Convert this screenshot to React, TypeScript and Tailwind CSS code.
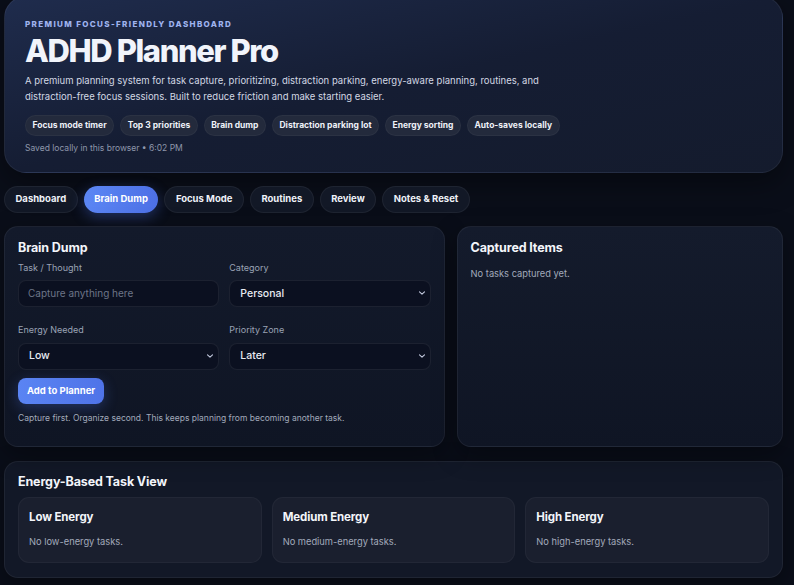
import React, { useState } from "react";

const features = [
  "Focus mode timer",
  "Top 3 priorities",
  "Brain dump",
  "Distraction parking lot",
  "Energy sorting",
  "Auto-saves locally",
];

const tabs = ["Dashboard", "Brain Dump", "Focus Mode", "Routines", "Review", "Notes & Reset"];

const Chevron = () => (
  <svg width="8" height="8" viewBox="0 0 8 8" className="pointer-events-none absolute right-[5px] top-1/2 -translate-y-1/2 text-[#c5cbe0]">
    <path d="M1.5 2.8 4 5.2 6.5 2.8" fill="none" stroke="currentColor" strokeWidth="1.1" strokeLinecap="round" strokeLinejoin="round" />
  </svg>
);

const Select = ({ value, options }: { value: string; options: string[] }) => (
  <div className="relative">
    <select
      defaultValue={value}
      className="h-[27px] w-full appearance-none rounded-[8px] border border-white/[0.07] bg-[#0b1020] pl-[10px] text-[10.5px] font-medium text-[#e8ebf3] outline-none"
    >
      {options.map((o) => (
        <option key={o}>{o}</option>
      ))}
    </select>
    <Chevron />
  </div>
);

const Label = ({ children }: { children: React.ReactNode }) => (
  <label className="mb-[5px] block text-[9px] leading-[12px] text-[#9aa3b5]">{children}</label>
);

export default function App() {
  const [active, setActive] = useState("Brain Dump");

  return (
    <div className="min-h-[585px] overflow-hidden bg-[#0a0e19] pl-[4px] pr-[11px] font-['Inter',sans-serif] text-white">
      {/* hero */}
      <header className="-mt-[4px] rounded-[22px] border border-white/[0.06] bg-gradient-to-br from-[#1f2c4d] via-[#151d33] to-[#141b2d] px-[20px] pb-[18px] pt-[22px] shadow-[0_10px_30px_rgba(0,0,0,0.4)]">
        <p className="text-[8px] font-extrabold leading-[10px] tracking-[0.17em] text-[#9fb3ee]">PREMIUM FOCUS-FRIENDLY DASHBOARD</p>
        <h1 className="mt-[4px] text-[31px] font-extrabold leading-[36px] tracking-[-0.045em] text-[#f1f4fb]">ADHD Planner Pro</h1>
        <p className="mt-[4px] max-w-[520px] text-[9.5px] leading-[16px] text-[#d3d8e4]">
          A premium planning system for task capture, prioritizing, distraction parking, energy-aware planning, routines, and distraction-free focus sessions. Built to reduce friction and make starting easier.
        </p>
        <div className="mt-[10px] flex flex-wrap gap-[6px]">
          {features.map((f) => (
            <span key={f} className="rounded-full border border-white/[0.04] bg-[#232a3c] px-[6.5px] py-[4px] text-[8.5px] font-bold leading-[11px] text-[#eef1f8]">
              {f}
            </span>
          ))}
        </div>
        <p className="mt-[6px] text-[8.5px] leading-[12px] text-[#8e97ab]">Saved locally in this browser • 6:02 PM</p>
      </header>

      {/* tabs */}
      <nav className="mt-[13px] flex gap-[6px]">
        {tabs.map((t) => (
          <button
            key={t}
            onClick={() => setActive(t)}
            className={
              t === active
                ? "h-[27px] rounded-full bg-gradient-to-r from-[#5b86f4] to-[#4d70e6] px-[10.5px] text-[9.5px] font-bold text-white shadow-[0_4px_14px_rgba(80,120,240,0.35)]"
                : "h-[27px] rounded-full border border-white/[0.05] bg-[#121826] px-[10.5px] text-[9.5px] font-bold text-[#eef1f8]"
            }
          >
            {t}
          </button>
        ))}
      </nav>

      {/* capture + list */}
      <div className="mt-[13px] grid grid-cols-[1.35fr_1fr] gap-[12px]">
        <section className="h-[221px] rounded-[14px] border border-white/[0.06] bg-gradient-to-b from-[#131a2b] to-[#0f1524] px-[13px] pt-[12px] shadow-[0_8px_24px_rgba(0,0,0,0.35)]">
          <h2 className="text-[12.5px] font-bold leading-[18px] tracking-[-0.01em] text-[#f3f5fa]">Brain Dump</h2>
          <div className="mt-[5px] grid grid-cols-2 gap-x-[10px]">
            <div>
              <Label>Task / Thought</Label>
              <input
                placeholder="Capture anything here"
                className="h-[27px] w-full rounded-[8px] border border-white/[0.07] bg-[#0b1020] px-[9px] text-[10px] text-white outline-none placeholder:text-[#6d7588]"
              />
            </div>
            <div>
              <Label>Category</Label>
              <Select value="Personal" options={["Personal", "Work", "Home", "Health"]} />
            </div>
            <div className="mt-[17px]">
              <Label>Energy Needed</Label>
              <Select value="Low" options={["Low", "Medium", "High"]} />
            </div>
            <div className="mt-[17px]">
              <Label>Priority Zone</Label>
              <Select value="Later" options={["Now", "Next", "Later"]} />
            </div>
          </div>
          <button className="mt-[8px] h-[26px] rounded-[8px] bg-gradient-to-r from-[#5a84f3] to-[#4f73e8] px-[9px] text-[9.5px] font-bold text-white shadow-[0_4px_14px_rgba(80,120,240,0.3)]">
            Add to Planner
          </button>
          <p className="mt-[8px] text-[8.5px] leading-[12px] text-[#a2aabb]">Capture first. Organize second. This keeps planning from becoming another task.</p>
        </section>

        <section className="h-[221px] rounded-[14px] border border-white/[0.06] bg-gradient-to-b from-[#141b2c] to-[#0f1524] px-[13px] pt-[12px] shadow-[0_8px_24px_rgba(0,0,0,0.35)]">
          <h2 className="text-[12.5px] font-bold leading-[18px] tracking-[-0.01em] text-[#f3f5fa]">Captured Items</h2>
          <p className="mt-[11px] text-[9.3px] leading-[12px] text-[#a2aabb]">No tasks captured yet.</p>
        </section>
      </div>

      {/* energy view */}
      <section className="mt-[14px] rounded-[14px] border border-white/[0.06] bg-[#121827] px-[13px] pb-[14px] pt-[11px] shadow-[0_8px_24px_rgba(0,0,0,0.35)]">
        <h2 className="text-[12.5px] font-bold leading-[18px] tracking-[-0.01em] text-[#f3f5fa]">Energy-Based Task View</h2>
        <div className="mt-[6px] grid grid-cols-3 gap-[10px]">
          {[
            ["Low Energy", "No low-energy tasks."],
            ["Medium Energy", "No medium-energy tasks."],
            ["High Energy", "No high-energy tasks."],
          ].map(([title, empty]) => (
            <div key={title} className="h-[66px] rounded-[11px] border border-white/[0.04] bg-[#1a1f2e] px-[10px] pt-[11px]">
              <h3 className="text-[11.5px] font-bold leading-[16px] tracking-[-0.01em] text-[#f3f5fa]">{title}</h3>
              <p className="mt-[11px] text-[9.3px] leading-[12px] text-[#a2aabb]">{empty}</p>
            </div>
          ))}
        </div>
      </section>
    </div>
  );
}
